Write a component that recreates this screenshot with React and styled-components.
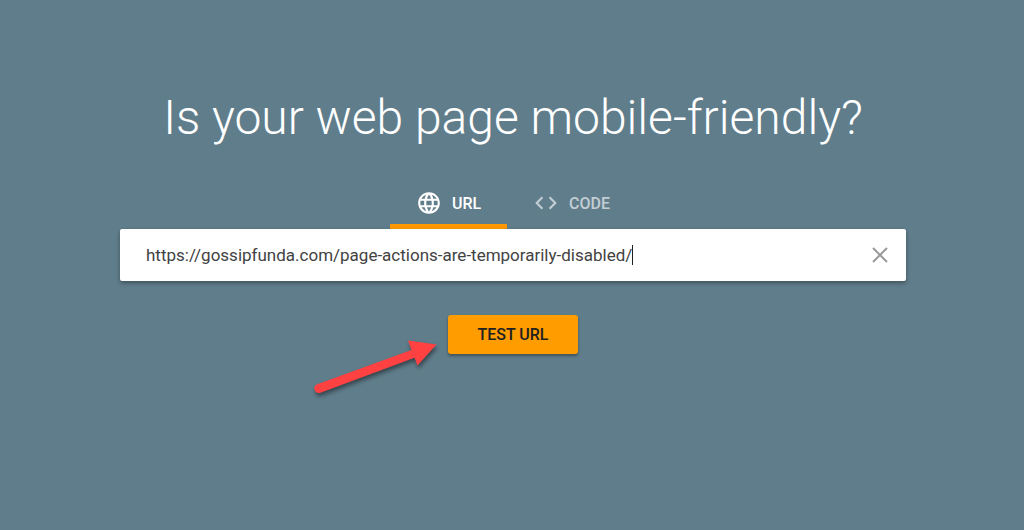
import React, { useState } from "react";
import styled, { createGlobalStyle } from "styled-components";

const App = () => {
  const [tab, setTab] = useState("url");
  const [url, setUrl] = useState(
    "https://gossipfunda.com/page-actions-are-temporarily-disabled/"
  );

  return (
    <Page>
      <GlobalStyle />
      <Title>Is your web page mobile-friendly?</Title>
      <Tabs role="tablist">
        <Tab
          type="button"
          role="tab"
          aria-selected={tab === "url"}
          $active={tab === "url"}
          onClick={() => setTab("url")}
        >
          <Icon viewBox="0 0 24 24" aria-hidden="true">
            <path d="M11.99 2C6.47 2 2 6.48 2 12s4.47 10 9.99 10C17.52 22 22 17.52 22 12S17.52 2 11.99 2zm6.93 6h-2.95c-.32-1.25-.78-2.45-1.38-3.56 1.84.63 3.37 1.91 4.33 3.56zM12 4.04c.83 1.2 1.48 2.53 1.91 3.96h-3.82c.43-1.43 1.08-2.76 1.91-3.96zM4.26 14C4.1 13.36 4 12.69 4 12s.1-1.36.26-2h3.38c-.08.66-.14 1.32-.14 2s.06 1.34.14 2H4.26zm.82 2h2.95c.32 1.25.78 2.45 1.38 3.56-1.84-.63-3.37-1.9-4.33-3.56zm2.95-8H5.08c.96-1.66 2.49-2.93 4.33-3.56C8.81 5.55 8.35 6.75 8.03 8zM12 19.96c-.83-1.2-1.48-2.53-1.91-3.96h3.82c-.43 1.43-1.08 2.76-1.91 3.96zM14.34 14H9.66c-.09-.66-.16-1.32-.16-2s.07-1.35.16-2h4.68c.09.65.16 1.32.16 2s-.07 1.34-.16 2zm.25 5.56c.6-1.11 1.06-2.31 1.38-3.56h2.95c-.96 1.65-2.49 2.93-4.33 3.56zM16.36 14c.08-.66.14-1.32.14-2s-.06-1.34-.14-2h3.38c.16.64.26 1.31.26 2s-.1 1.36-.26 2h-3.38z" />
          </Icon>
          URL
        </Tab>
        <Tab
          type="button"
          role="tab"
          aria-selected={tab === "code"}
          $active={tab === "code"}
          onClick={() => setTab("code")}
        >
          <Icon viewBox="0 0 24 24" aria-hidden="true">
            <path d="M9.4 16.6L4.8 12l4.6-4.6L8 6l-6 6 6 6 1.4-1.4zm5.2 0l4.6-4.6-4.6-4.6L16 6l6 6-6 6-1.4-1.4z" />
          </Icon>
          CODE
        </Tab>
      </Tabs>
      <Form onSubmit={(e) => e.preventDefault()}>
        <Field>
          <Input
            type="text"
            aria-label="Enter a URL to test"
            value={url}
            onChange={(e) => setUrl(e.target.value)}
          />
          <Caret />
          <Clear type="button" aria-label="Clear" onClick={() => setUrl("")}>
            <CloseIcon viewBox="0 0 24 24" aria-hidden="true">
              <path d="M5 5l14 14M19 5L5 19" />
            </CloseIcon>
          </Clear>
        </Field>
        <Actions>
          <Arrow viewBox="0 0 136 68" aria-hidden="true">
            <path d="M9.3 49.2L103.5 15L100 5.5L128.5 9.5L109.5 30.5L106.5 22.8L12.5 57.8A4.4 4.4 0 0 1 9.3 49.2Z" />
          </Arrow>
          <Submit type="submit">TEST URL</Submit>
        </Actions>
      </Form>
    </Page>
  );
};
export default App;

const GlobalStyle = createGlobalStyle`
  * {
    box-sizing: border-box;
  }
  body {
    margin: 0;
    background-color: #607d8b;
    font-family: Roboto, sans-serif;
  }
  button,
  input {
    font-family: inherit;
  }
`;

const Page = styled.main`
  display: flex;
  flex-direction: column;
  align-items: center;
  min-height: 100vh;
  padding: 88px 24px 48px 26px;
  background-color: #607d8b;
`;

const Title = styled.h1`
  margin: 0 0 32px;
  font-size: 48px;
  font-weight: 300;
  line-height: 60px;
  text-align: center;
  color: #ffffff;
`;

const Tabs = styled.div`
  display: flex;
`;

const Tab = styled.button`
  display: flex;
  align-items: center;
  gap: 10px;
  height: 49px;
  padding: 2px 26px 0;
  border: 0;
  border-bottom: 5px solid ${(p) => (p.$active ? "#ff9800" : "transparent")};
  background: none;
  font-size: 16px;
  font-weight: 500;
  color: ${(p) => (p.$active ? "#ffffff" : "#c3ced4")};
  cursor: pointer;
`;

const Icon = styled.svg`
  width: 26px;
  height: 26px;
  fill: currentColor;
`;

const Form = styled.form`
  width: 100%;
  max-width: 786px;
`;

const Field = styled.div`
  display: flex;
  align-items: center;
  height: 52px;
  padding: 0 14px 0 26px;
  border-radius: 2px;
  background-color: #ffffff;
  box-shadow: 0 2px 4px rgba(0, 0, 0, 0.35);
`;

const Input = styled.input`
  field-sizing: content;
  min-width: 0;
  height: 32px;
  padding: 0;
  border: 0;
  outline: 0;
  background: none;
  font-size: 17px;
  color: #424242;
`;

const Caret = styled.span`
  width: 1px;
  height: 20px;
  background-color: #212121;
`;

const Clear = styled.button`
  display: flex;
  margin-left: auto;
  padding: 0;
  border: 0;
  background: none;
  color: #999999;
  cursor: pointer;
`;

const CloseIcon = styled.svg`
  width: 24px;
  height: 24px;
  fill: none;
  stroke: currentColor;
  stroke-width: 2;
`;

const Actions = styled.div`
  position: relative;
  width: max-content;
  margin: 34px auto 0;
`;

const Submit = styled.button`
  display: block;
  width: 130px;
  height: 39px;
  padding: 0;
  border: 0;
  border-radius: 3px;
  background-color: #ff9c00;
  box-shadow: 0 2px 3px rgba(0, 0, 0, 0.35);
  font-size: 16px;
  font-weight: 500;
  color: #212121;
  cursor: pointer;
`;

/* points at the submit button from the lower left */
const Arrow = styled.svg`
  position: absolute;
  top: 20px;
  right: 134px;
  width: 136px;
  height: 68px;
  overflow: visible;
  fill: #ff4141;
  filter: drop-shadow(1px 3px 2px rgba(0, 0, 0, 0.45));
`;
